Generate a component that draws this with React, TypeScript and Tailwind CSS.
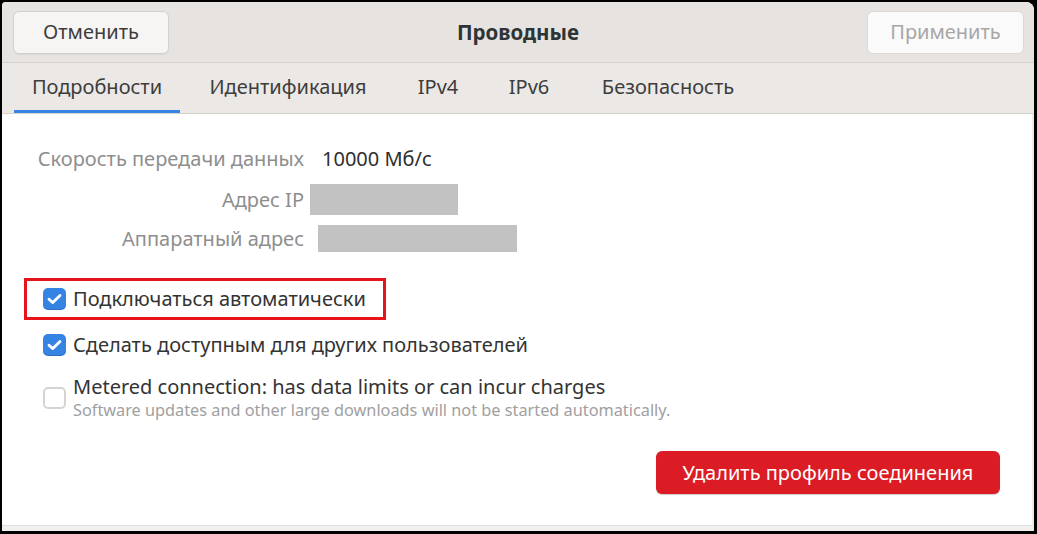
import React from "react";

const font = { fontFamily: '"Noto Sans", "Open Sans", sans-serif' };

function Check({ checked }: { checked: boolean }) {
  if (checked) {
    return (
      <div className="w-[23px] h-[22px] rounded-[5px] bg-[#3584e4] flex items-center justify-center shrink-0 shadow-[inset_0_-1px_0_rgba(0,0,0,0.15)]">
        <svg width="15" height="12" viewBox="0 0 15 12">
          <path d="M2 6.2 L5.8 9.6 L13 2.4" fill="none" stroke="white" strokeWidth="2.8" strokeLinecap="round" strokeLinejoin="round" />
        </svg>
      </div>
    );
  }
  return <div className="w-[23px] h-[22px] rounded-[5px] border-2 border-[#d6d3d0] bg-white shrink-0" />;
}

export default function App() {
  return (
    <div className="w-[1037px] h-[534px] bg-black pt-[2px] pl-[2px] pr-[3px] pb-[3px]" style={font}>
      <div className="w-full h-full bg-white rounded-tr-[8px] rounded-tl-[4px] overflow-hidden flex flex-col">
        {/* header */}
        <div className="h-[61px] shrink-0 bg-[#e6e3e0] border-b border-[#d3cfcb] flex items-center justify-between pl-[11px] pr-[10px]">
          <div className="w-[156px] h-[43px] rounded-[6px] bg-[#f6f5f4] border border-[#d4d0cc] shadow-[0_1px_0_rgba(0,0,0,0.05)] flex items-center justify-center text-[20px] text-[#3d3d3d]">
            Отменить
          </div>
          <div className="text-[20.5px] font-bold text-[#2e3436]">Проводные</div>
          <div className="w-[157px] h-[43px] rounded-[6px] bg-[#fafafa] border border-[#dcd8d4] flex items-center justify-center text-[20px] text-[#a7a7a7]">
            Применить
          </div>
        </div>
        {/* tabs */}
        <div className="h-[51px] shrink-0 bg-[#ebe8e5] border-b border-[#d6d2ce] flex items-stretch pl-[12px]">
          {[
            { t: "Подробности", w: 166, active: true },
            { t: "Идентификация", w: 216 },
            { t: "IPv4", w: 84 },
            { t: "IPv6", w: 98 },
            { t: "Безопасность", w: 180 },
          ].map((tab, i) => (
            <div key={i} className="relative flex items-center justify-center text-[20px] text-[#3d3d3d] pb-[2px]" style={{ width: tab.w }}>
              {tab.t}
              {tab.active && <div className="absolute left-0 right-0 bottom-0 h-[3px] bg-[#3584e4]" />}
            </div>
          ))}
        </div>
        {/* content */}
        <div className="flex-1 flex flex-col border-r-2 border-[#ecebea]">
          <div className="flex-1 flex flex-col pl-[22px] pt-[29px]">
            <div className="grid grid-cols-[280px_1fr] gap-x-[18px] items-center">
              <div className="text-right text-[20px] text-[#8e8e8e] h-[32px] leading-[32px] whitespace-nowrap">Скорость передачи данных</div>
              <div className="text-[20px] text-[#2e2e2e] h-[32px] leading-[32px]">10000 Мб/с</div>
              <div className="mt-[9px] text-right text-[20px] text-[#8e8e8e] h-[31px] leading-[31px]">Адрес IP</div>
              <div className="mt-[9px] h-[31px] flex items-center"><div className="w-[148px] h-[31px] bg-[#c2c2c2] -ml-[12px]" /></div>
              <div className="mt-[10px] text-right text-[20px] text-[#8e8e8e] h-[27px] leading-[27px]">Аппаратный адрес</div>
              <div className="mt-[10px] h-[27px] flex items-center"><div className="w-[199px] h-[27px] bg-[#c2c2c2] -ml-[4px]" /></div>
            </div>

            <div className="mt-[26px] w-[362px] h-[42px] border-[3px] border-[#e8141c] flex items-center pl-[16px] gap-[7px]">
              <Check checked />
              <span className="text-[20px] leading-[24px] text-[#333]">Подключаться автоматически</span>
            </div>

            <div className="mt-[13px] flex items-center pl-[19px] gap-[7px] h-[24px]">
              <Check checked />
              <span className="text-[20px] leading-[24px] text-[#333]">Сделать доступным для других пользователей</span>
            </div>

            <div className="mt-[18px] flex items-start pl-[19px] gap-[7px]">
              <div className="pt-[12px]"><Check checked={false} /></div>
              <div className="flex flex-col">
                <span className="text-[20px] text-[#333] leading-[24px]">Metered connection: has data limits or can incur charges</span>
                <span className="text-[16.3px] text-[#a0a0a0] leading-[22px]">Software updates and other large downloads will not be started automatically.</span>
              </div>
            </div>

            <div className="mt-[30px] flex justify-end pr-[32px]">
              <div className="w-[344px] h-[43px] rounded-[6px] bg-[#dc1c24] shadow-[0_1px_1px_rgba(0,0,0,0.2)] flex items-center justify-center text-[20px] text-white">
                Удалить профиль соединения
              </div>
            </div>
          </div>
          <div className="h-[6px] bg-[#f1f0ef] border-t border-[#e3e1df]" />
        </div>
      </div>
    </div>
  );
}
